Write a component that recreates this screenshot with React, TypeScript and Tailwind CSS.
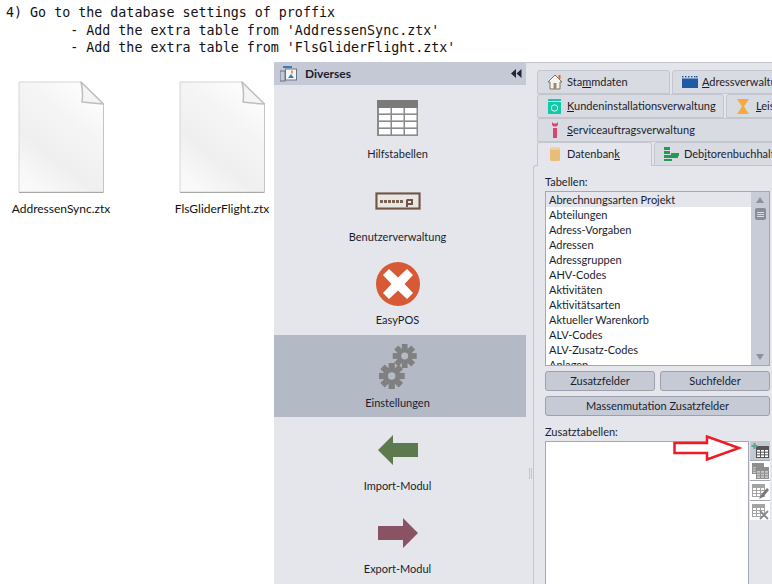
import React from "react";

const ui = "font-['Lato','Open_Sans',sans-serif] text-[11px] text-[#1a1d2e]";

function FileIcon({ id }: { id: string }) {
  return (
    <svg width="87" height="113" viewBox="0 0 87 113" className="block">
      <defs>
        <linearGradient id={id} x1="0.85" y1="0" x2="0.25" y2="1">
          <stop offset="0" stopColor="#ffffff" />
          <stop offset="0.35" stopColor="#f5f5f5" />
          <stop offset="0.7" stopColor="#efefef" />
          <stop offset="1" stopColor="#f9f9f9" />
        </linearGradient>
      </defs>
      <path d="M1 1H63L85.5 23V111H1Z" fill={`url(#${id})`} stroke="#d6d6d6" strokeWidth="1" />
      <path d="M1 111.5H85.5" stroke="#a8a8a8" strokeWidth="1" />
      <path d="M85.5 23V111" stroke="#c4c4c4" strokeWidth="1" />
      <path d="M63 1C65 9 65 14 64 21C72 22 78 22.5 85.5 23Z" fill="#f4f4f4" stroke="#bdbdbd" strokeWidth="1.5" strokeLinejoin="round" />
    </svg>
  );
}

function TableIcon() {
  return (
    <svg width="41" height="36" viewBox="0 0 41 36">
      <rect width="41" height="36" fill="#8b8b8b" />
      <rect width="41" height="8" fill="#7b7b7b" />
      {[8, 15, 22, 29].map((y) =>
        [2, 15, 28].map((x) => <rect key={`${x}-${y}`} x={x} y={y} width="11.5" height="5.4" fill="#fff" />)
      )}
    </svg>
  );
}

function PasswordIcon() {
  return (
    <svg width="46" height="18" viewBox="0 0 46 18">
      <rect x="0" y="0" width="46" height="18" fill="#cfc8c2" />
      <rect x="1.5" y="1.5" width="43" height="15" fill="#e9e7e4" stroke="#6e5547" strokeWidth="2" />
      {[5, 9, 13, 17, 21, 25].map((x) => (
        <rect key={x} x={x} y="8" width="3" height="3" fill="#7a6355" />
      ))}
      <path d="M32 7.5V15M32 8H37V12H32" fill="none" stroke="#6e5547" strokeWidth="2" />
    </svg>
  );
}

function ErrorIcon() {
  return (
    <svg width="44" height="44" viewBox="0 0 44 44">
      <circle cx="22" cy="22" r="22" fill="#d65a35" />
      <path d="M13 7L22 15.5L31 7L37 13L28.5 22L37 31L31 37L22 28.5L13 37L7 31L15.5 22L7 13Z" fill="#fff" />
    </svg>
  );
}

function Gear({ cx, cy, r }: { cx: number; cy: number; r: number }) {
  const teeth = [0, 45, 90, 135, 180, 225, 270, 315];
  return (
    <g>
      {teeth.map((a) => (
        <rect
          key={a}
          x={cx - r * 0.24}
          y={cy - r}
          width={r * 0.48}
          height={r * 0.5}
          fill="#808080"
          transform={`rotate(${a} ${cx} ${cy})`}
        />
      ))}
      <circle cx={cx} cy={cy} r={r * 0.47} fill="none" stroke="#808080" strokeWidth={r * 0.36} />
    </g>
  );
}

function GearsIcon() {
  return (
    <svg width="38" height="45" viewBox="0 0 38 45">
      <Gear cx={25.7} cy={12} r={12} />
      <Gear cx={12.7} cy={32} r={13} />
    </svg>
  );
}

function ArrowLeftIcon() {
  return (
    <svg width="40" height="30" viewBox="0 0 40 30">
      <path d="M0 15L15 0V8H40V22H15V30Z" fill="#5c7a4e" />
    </svg>
  );
}

function ArrowRightIcon() {
  return (
    <svg width="40" height="30" viewBox="0 0 40 30">
      <path d="M40 15L25 0V8H0V22H25V30Z" fill="#8a5364" />
    </svg>
  );
}

function NavItem({ label, icon, active }: { label: string; icon: React.ReactNode; active?: boolean }) {
  return (
    <div className={`h-[83px] flex flex-col items-center pr-[5px] border-t border-[#e4e6ec] ${active ? "bg-[#b3b9c5]" : ""}`}>
      <div className="h-[61px] flex items-center justify-center pt-[2px]">{icon}</div>
      <div className="leading-[14px]">{label}</div>
    </div>
  );
}

function HouseIcon() {
  return (
    <svg width="16" height="16" viewBox="0 0 16 16">
      <path d="M8 1L1 8H3V15H13V8H15L8 1Z" fill="#f6f3ee" stroke="#7c7468" strokeWidth="1" />
      <rect x="11.5" y="1" width="2" height="4" fill="#d8693c" />
      <rect x="6.5" y="9" width="3" height="6" fill="#9b8a72" />
    </svg>
  );
}

function BlueIcon() {
  return (
    <svg width="16" height="12" viewBox="0 0 16 12">
      <rect y="2.5" width="16" height="9.5" fill="#1f5aa5" />
      {[0, 3, 6, 9, 12, 14].map((x) => (
        <rect key={x} x={x} y="0" width="1.5" height="1.4" fill="#1f5aa5" />
      ))}
    </svg>
  );
}

function TealIcon() {
  return (
    <svg width="14" height="15" viewBox="0 0 14 15">
      <rect width="13" height="15" fill="#12c9a8" />
      <rect y="2" width="13" height="1" fill="#e4f7f3" />
      <circle cx="6.5" cy="9" r="3.2" fill="none" stroke="#e4f7f3" strokeWidth="1" />
    </svg>
  );
}

function HourglassIcon() {
  return (
    <svg width="13" height="15" viewBox="0 0 13 15">
      <path d="M0 0H12L7 7.5L12 15H0L5 7.5Z" fill="#f8a93e" />
    </svg>
  );
}

function WrenchIcon() {
  return (
    <svg width="8" height="16" viewBox="0 0 8 16">
      <path d="M1 0V3L2.5 4.5H5.5L7 3V0L5.5 1.5H2.5Z" fill="#d9456f" />
      <rect x="2" y="6" width="4" height="10" fill="#d9456f" />
    </svg>
  );
}

function DbIcon() {
  return (
    <svg width="10" height="15" viewBox="0 0 10 15">
      <rect y="1" width="10" height="13" rx="1.5" fill="#e7bd78" />
      <ellipse cx="5" cy="1.5" rx="5" ry="1.5" fill="#f0d09a" />
    </svg>
  );
}

function LedgerIcon() {
  return (
    <svg width="15" height="14" viewBox="0 0 15 14">
      <rect width="6" height="3" fill="#1f9d57" />
      <rect y="4" width="6" height="3" fill="#1f9d57" />
      <rect y="8" width="14" height="3" fill="#1f9d57" />
      <rect x="7" y="6" width="8" height="3" fill="#1f9d57" />
      <rect y="12" width="8" height="2" fill="#1f9d57" />
    </svg>
  );
}

function Tab({ icon, children, className, active }: { icon: React.ReactNode; children: React.ReactNode; className: string; active?: boolean }) {
  return (
    <div
      className={`flex items-center shrink-0 rounded-t-[3px] border border-[#c3c6ce] whitespace-nowrap ${active ? "bg-[#e4e6ec] border-b-0 relative z-10 h-[24px]" : "bg-[#d9dbe2] h-[24px]"} ${className}`}
    >
      <span className="w-[29px] flex justify-center shrink-0 pl-[4px]">{icon}</span>
      <span>{children}</span>
    </div>
  );
}

const tables = [
  "Abteilungen",
  "Adress-Vorgaben",
  "Adressen",
  "Adressgruppen",
  "AHV-Codes",
  "Aktivitäten",
  "Aktivitätsarten",
  "Aktueller Warenkorb",
  "ALV-Codes",
  "ALV-Zusatz-Codes",
  "Anlagen",
];

function Btn({ children, className }: { children: React.ReactNode; className: string }) {
  return (
    <div className={`h-[20px] flex items-center justify-center rounded-[3px] border border-[#9ca1ad] bg-[#c6cad5] ${className}`}>
      {children}
    </div>
  );
}

function ToolIcon({ kind }: { kind: "add" | "copy" | "edit" | "del" }) {
  const grid = (x: number, y: number, w: number, h: number, c: string) => (
    <g>
      <rect x={x} y={y} width={w} height={h} fill={c} />
      {[0, 1, 2].map((r) =>
        [0, 1, 2].map((q) => (
          <rect
            key={`${r}${q}`}
            x={x + 1 + (q * (w - 1)) / 3}
            y={y + 4 + (r * (h - 4)) / 3}
            width={(w - 1) / 3 - 1}
            height={(h - 4) / 3 - 1}
            fill={kind === "copy" ? "#c8c8c8" : "#fff"}
          />
        ))
      )}
    </g>
  );
  return (
    <svg width="18" height="18" viewBox="0 0 18 18">
      {kind === "add" && (
        <>
          {grid(5, 4, 13, 12, "#555")}
          <path d="M3.5 1V7M0.5 4H6.5" stroke="#5fa58c" strokeWidth="2" />
        </>
      )}
      {kind === "copy" && (
        <>
          {grid(1, 1, 12, 11, "#8e8e8e")}
          {grid(5, 5, 13, 12, "#8e8e8e")}
        </>
      )}
      {kind === "edit" && (
        <>
          {grid(1, 2, 13, 13, "#a3a3a3")}
          <path d="M8 17L10 13L16 6L18 8L12 15Z" fill="#777" />
        </>
      )}
      {kind === "del" && (
        <>
          {grid(1, 2, 13, 13, "#a3a3a3")}
          <path d="M9 9L17 17M17 9L9 17" stroke="#8a8a8a" strokeWidth="1.8" />
        </>
      )}
    </svg>
  );
}

export default function App() {
  return (
    <div className="relative w-[772px] h-[584px] overflow-hidden bg-white flex flex-col">
      <pre className="h-[62px] pl-[6px] pt-[4px] font-['DejaVu_Sans_Mono',monospace] text-[13.33px] leading-[17.5px] text-[#111]">
        {"4) Go to the database settings of proffix\n        - Add the extra table from 'AddressenSync.ztx'\n        - Add the extra table from 'FlsGliderFlight.ztx'"}
      </pre>
      <div className="flex flex-1 min-h-0">
        <div className={`w-[274px] flex ${ui} text-[12px] pt-[19px] text-[#111]`}>
          <div className="w-[122px] flex flex-col items-center">
            <FileIcon id="fa" />
            <div className="mt-[7px] leading-[16px]">AddressenSync.ztx</div>
          </div>
          <div className="w-[48px]" />
          <div className="w-[104px] flex flex-col items-center">
            <FileIcon id="fb" />
            <div className="mt-[7px] leading-[16px] whitespace-nowrap">FlsGliderFlight.ztx</div>
          </div>
        </div>
        <div className={`flex-1 flex bg-[#e4e6ec] ${ui}`}>
          <div className="w-[252px] flex flex-col shrink-0">
            <div className="h-[23px] bg-[#c5c9d5] flex items-center pl-[6px] pr-[4px]">
              <svg width="17" height="16" viewBox="0 0 17 16">
                <rect x="3" y="0" width="9" height="2" fill="#3f7ab8" />
                <rect x="0" y="5" width="5" height="10" fill="none" stroke="#6a7382" />
                <rect x="5.5" y="3" width="11" height="11" fill="#f5f6f9" stroke="#6a7382" />
                <path d="M8 12L11 8L14 12Z" fill="#3f7ab8" />
                <rect x="11" y="4.5" width="2" height="3" fill="#e5a04a" />
              </svg>
              <span className="ml-[8px] font-bold text-[12px]">Diverses</span>
              <svg width="11" height="9" viewBox="0 0 11 9" className="ml-auto">
                <path d="M0 4.5L5 0V9ZM5.5 4.5L10.5 0V9Z" fill="#23263a" />
              </svg>
            </div>
            <NavItem label="Hilfstabellen" icon={<TableIcon />} />
            <NavItem label="Benutzerverwaltung" icon={<PasswordIcon />} />
            <NavItem label="EasyPOS" icon={<ErrorIcon />} />
            <NavItem label="Einstellungen" active icon={<GearsIcon />} />
            <NavItem label="Import-Modul" icon={<ArrowLeftIcon />} />
            <NavItem label="Export-Modul" icon={<ArrowRightIcon />} />
          </div>
          <div className="flex-1 min-w-0 flex flex-col overflow-hidden pl-[7px] border-t border-[#c3c6ce]">
            <div className="pt-[7px] pl-[4px] flex flex-col">
              <div className="flex gap-[2px]">
                <Tab className="w-[133px]" icon={<HouseIcon />}>Sta<u>m</u>mdaten</Tab>
                <Tab className="w-[120px]" icon={<BlueIcon />}><u>A</u>dressverwaltung</Tab>
              </div>
              <div className="flex gap-[2px]">
                <Tab className="w-[187px]" icon={<TealIcon />}><u>K</u>undeninstallationsverwaltung</Tab>
                <Tab className="w-[80px]" icon={<HourglassIcon />}><u>L</u>eistungen</Tab>
              </div>
              <Tab className="w-[240px]" icon={<WrenchIcon />}><u>S</u>erviceauftragsverwaltung</Tab>
              <div className="flex gap-[2px] -mb-px">
                <Tab className="w-[115px]" active icon={<DbIcon />}>Datenban<u>k</u></Tab>
                <Tab className="w-[130px]" icon={<LedgerIcon />}>Deb<u>i</u>torenbuchhaltung</Tab>
              </div>
            </div>
            <div className="flex-1 border-l border-t border-[#c3c6ce] rounded-tl-[3px] pl-[11px] flex flex-col min-h-0 w-[260px]">
              <div className="h-[25px] pt-[8px] leading-[15px]">Tabellen:</div>
              <div className="w-[225px] h-[175px] border border-[#a3a8b4] flex bg-white overflow-hidden shrink-0">
                <div className="flex-1 min-w-0">
                  <div className="h-[15px] bg-[#e4e6ec] pl-[3px] leading-[15px]">Abrechnungsarten Projekt</div>
                  {tables.map((t) => (
                    <div key={t} className="h-[15px] pl-[3px] leading-[15px]">{t}</div>
                  ))}
                </div>
                <div className="w-[18px] bg-[#c8ccd6] flex flex-col items-center relative">
                  <svg width="8" height="6" viewBox="0 0 8 6" className="mt-[5px]"><path d="M4 0L8 6H0Z" fill="#8d919c" /></svg>
                  <div className="mt-[5px] w-[11px] h-[12px] rounded-[2px] bg-[#888d99] flex flex-col gap-px items-center justify-center">
                    <div className="w-[7px] h-px bg-[#d9dbe2]" />
                    <div className="w-[7px] h-px bg-[#d9dbe2]" />
                    <div className="w-[7px] h-px bg-[#d9dbe2]" />
                  </div>
                  <svg width="8" height="6" viewBox="0 0 8 6" className="mt-auto mb-[5px]"><path d="M4 6L8 0H0Z" fill="#8d919c" /></svg>
                </div>
              </div>
              <div className="flex gap-[5px] mt-[5px] w-[225px]">
                <Btn className="w-[110px]">Zusatzfelder</Btn>
                <Btn className="w-[110px]">Suchfelder</Btn>
              </div>
              <Btn className="w-[225px] mt-[5px]">Massenmutation Zusatzfelder</Btn>
              <div className="h-[25px] pt-[8px] leading-[15px]">Zusatztabellen:</div>
              <div className="flex w-[225px] flex-1 min-h-0">
                <div className="w-[204px] bg-white border-l border-t border-r border-[#a3a8b4]" />
                <div className="ml-px w-[20px] flex flex-col gap-px bg-[#a3a8b4] self-start">
                  {(["add", "copy", "edit", "del"] as const).map((k, i) => (
                    <div key={k} className={`w-[20px] h-[19px] flex items-center justify-center ${i === 0 ? "bg-[#c5c9d5]" : "bg-white"}`}>
                      <ToolIcon kind={k} />
                    </div>
                  ))}
                </div>
              </div>
            </div>
          </div>
        </div>
      </div>
      <svg className="absolute left-[673px] top-[435px]" width="69" height="26" viewBox="0 0 69 26">
        <path d="M1.5 8H34V1.5L66 13L34 24.5V18H1.5Z" fill="#fff" stroke="#ee1c25" strokeWidth="2.5" />
      </svg>
      <div className="absolute left-[529px] top-[468px] w-[3px] h-[11px] border-x border-[#c3c6ce]" />
    </div>
  );
}
